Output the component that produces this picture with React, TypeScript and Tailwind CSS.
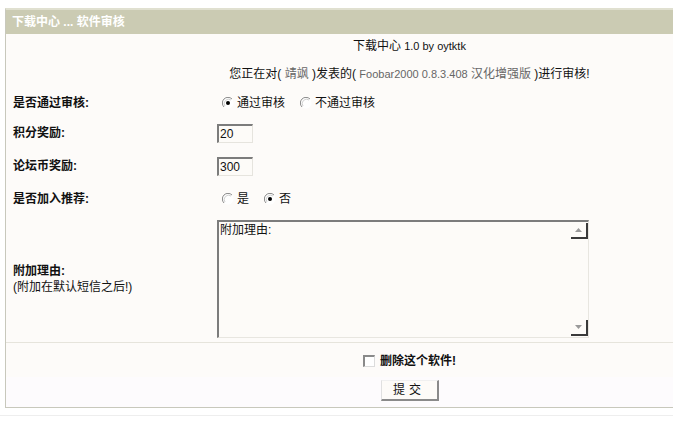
import React from "react";

const font = {
  fontFamily: '"Liberation Sans", "Noto Sans CJK SC", sans-serif',
};

function Radio({ checked }: { checked?: boolean }) {
  return (
    <svg width="12" height="12" viewBox="0 0 12 12" className="shrink-0">
      <circle cx="6" cy="6" r="5.5" fill="#ffffff" />
      <path d="M10 2 A5.5 5.5 0 0 0 2 10" fill="none" stroke="#8a8a8a" strokeWidth="1" />
      <path d="M9 3 A4.3 4.3 0 0 0 3 9" fill="none" stroke="#d0d0d0" strokeWidth="1" />
      {checked && <circle cx="6" cy="6" r="2" fill="#000000" />}
    </svg>
  );
}

function Label({ children }: { children: React.ReactNode }) {
  return (
    <div className="w-[211px] shrink-0 pl-[7px] text-[12px] font-bold text-[#111]">
      {children}
    </div>
  );
}

function TextBox({ value }: { value: string }) {
  return (
    <div className="flex h-[19px] w-[36px] items-center border-t-2 border-l-2 border-b border-r border-t-[#7c7c7c] border-l-[#7c7c7c] border-b-[#e6e4de] border-r-[#e6e4de] bg-[#fdfbf8] pl-[1px] text-[12px] leading-none text-[#111]">
      {value}
    </div>
  );
}

function ScrollBtn({ up }: { up?: boolean }) {
  return (
    <div className="flex h-[16px] w-[17px] items-center justify-center border-b-2 border-r-2 border-[#3a3a3a]">
      <svg width="7" height="4" viewBox="0 0 7 4">
        {up ? (
          <path d="M0 4 L3.5 0 L7 4 Z" fill="#9a9a9a" />
        ) : (
          <path d="M0 0 L3.5 4 L7 0 Z" fill="#9a9a9a" />
        )}
      </svg>
    </div>
  );
}

export default function App() {
  return (
    <div className="h-[426px] w-[673px] overflow-hidden bg-white pt-[8px] text-[#111]" style={font}>
      {/* table is wider than the window, so centred cells sit right of middle */}
      <div className="ml-[5px] w-[808px] border-l border-b border-[#c8c8bc] border-t-2 border-t-[#e0e0d0] bg-[#fdfbf9]">
        {/* Title bar */}
        <div className="flex h-[24px] items-center bg-[#cbcbb3] pl-[6px] text-[12px] font-bold text-white">
          下载中心 ... 软件审核
        </div>

        <div className="flex h-[24px] items-center justify-center text-[12px]">
          下载中心 <span className="ml-[3px] text-[11px]">1.0 by oytktk</span>
        </div>

        <div className="flex h-[31px] items-center justify-center text-[12px]">
          <span>
            您正在对( <span className="text-[#666]">靖飒</span> )发表的({" "}
            <span className="text-[#666]">
              <span className="text-[11px]">Foobar2000 0.8.3.408</span> 汉化增强版
            </span>{" "}
            )进行审核!
          </span>
        </div>

        <div className="flex h-[28px] items-center">
          <Label>是否通过审核:</Label>
          <div className="flex items-center pl-[5px] text-[12px]">
            <Radio checked />
            <span className="ml-[3px]">通过审核</span>
            <span className="ml-[15px]">
              <Radio />
            </span>
            <span className="ml-[3px]">不通过审核</span>
          </div>
        </div>

        <div className="flex h-[32px] items-center">
          <Label>积分奖励:</Label>
          <TextBox value="20" />
        </div>

        <div className="flex h-[34px] items-center">
          <Label>论坛币奖励:</Label>
          <TextBox value="300" />
        </div>

        <div className="flex h-[32px] items-center">
          <Label>是否加入推荐:</Label>
          <div className="flex items-center pl-[5px] text-[12px]">
            <Radio />
            <span className="ml-[3px]">是</span>
            <span className="ml-[15px]">
              <Radio checked />
            </span>
            <span className="ml-[3px]">否</span>
          </div>
        </div>

        <div className="flex h-[127px] items-center">
          <div className="w-[211px] shrink-0 pl-[7px] text-[12px] leading-[16px]">
            <div className="font-bold">附加理由:</div>
            <div>(附加在默认短信之后!)</div>
          </div>
          <div className="flex h-[118px] w-[372px] border-t-2 border-l-2 border-b border-r border-t-[#7c7c7c] border-l-[#7c7c7c] border-b-[#e8e6e0] border-r-[#e8e6e0] bg-[#fdfbf8]">
            <div className="flex-1 pl-[1px] pt-[1px] text-[12px] leading-[14px]">附加理由:</div>
            <div className="flex flex-col justify-between pb-[1px] pt-[1px]">
              <ScrollBtn up />
              <ScrollBtn />
            </div>
          </div>
        </div>

        <div className="h-[2px] border-t border-[#e6e4dc]" />

        <div className="flex h-[33px] items-center justify-center">
          <span className="h-[12px] w-[12px] border-t-2 border-l-2 border-b border-r border-t-[#8a8a8a] border-l-[#8a8a8a] border-b-[#dcdcdc] border-r-[#dcdcdc] bg-white" />
          <span className="ml-[5px] text-[12px] font-bold">删除这个软件!</span>
        </div>

        <div className="flex h-[30px] items-start justify-center bg-[#fdfbfd] pt-[3px]">
          <div className="flex h-[21px] w-[58px] items-center justify-center border-t border-l border-b-2 border-r-2 border-t-[#f0f0f0] border-l-[#e0e0e0] border-b-[#8a8a8a] border-r-[#8a8a8a] bg-[#fdfbf8] text-[12px] tracking-[4px]">
            提交
          </div>
        </div>
      </div>
      <div className="mt-[7px] h-px bg-[#eeeeee]" />
    </div>
  );
}
